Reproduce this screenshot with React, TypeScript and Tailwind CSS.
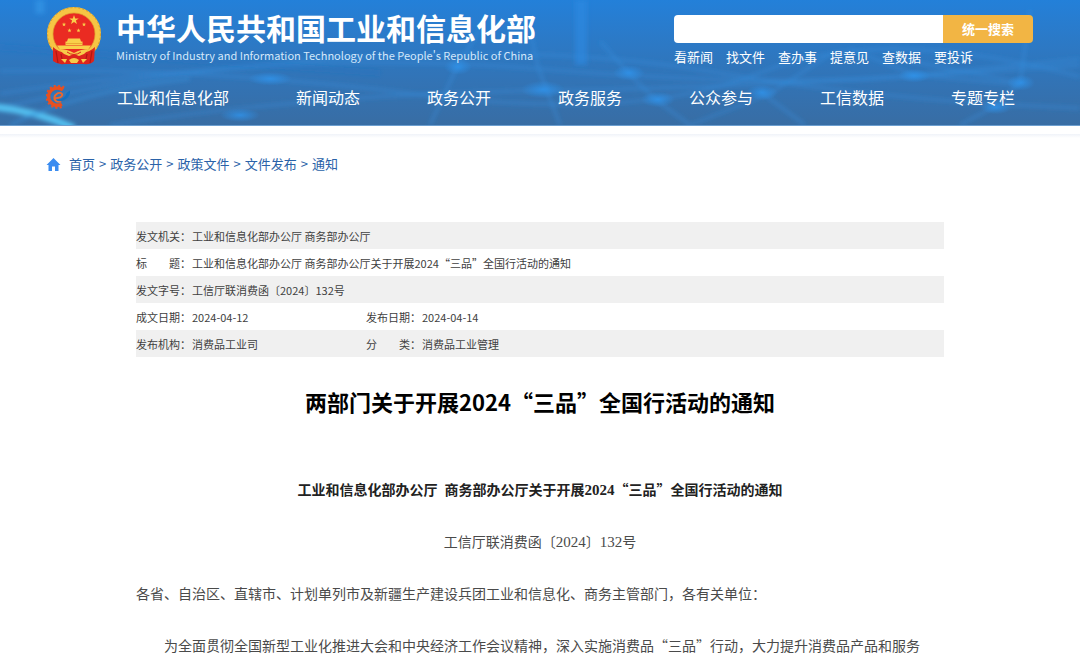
const navItems = ["工业和信息化部", "新闻动态", "政务公开", "政务服务", "公众参与", "工信数据", "专题专栏"]
const quickLinks = ["看新闻", "找文件", "查办事", "提意见", "查数据", "要投诉"]
const crumbs = ["首页", "政务公开", "政策文件", "文件发布", "通知"]

const rows = [
  [["发文机关：", "工业和信息化部办公厅 商务部办公厅"]],
  [["标　　题：", "工业和信息化部办公厅 商务部办公厅关于开展2024“三品”全国行活动的通知"]],
  [["发文字号：", "工信厅联消费函〔2024〕132号"]],
  [["成文日期：", "2024-04-12"], ["发布日期：", "2024-04-14"]],
  [["发布机构：", "消费品工业司"], ["分　　类：", "消费品工业管理"]],
]

const star = "M0 -1 L.24 -.32 L.95 -.31 L.38 .12 L.59 .81 L0 .4 L-.59 .81 L-.38 .12 L-.95 -.31 L-.24 -.32Z"

const Emblem = () => (
  <svg className="h-[58px] w-14 shrink-0" viewBox="0 0 56 58" aria-hidden="true">
    <circle cx="28" cy="27" r="24" fill="#ea2b22" stroke="#f6c544" strokeWidth="6" />
    <circle cx="28" cy="27" r="26.4" fill="none" stroke="#d99a25" strokeWidth="1" strokeDasharray="2 2" />
    <circle cx="28" cy="27" r="21" fill="none" stroke="#dc9b2c" strokeWidth=".7" />
    <path d="M7 40 Q12 45 20 46 L28 48 L36 46 Q44 45 49 40 L48 54 Q44 58 38 57 H18 Q12 58 7 54Z" fill="#dc241d" />
    <path d="M10 44 L12 56 M46 44 L44 56 M15 47 L16 52 M41 47 L40 52" stroke="#b01814" strokeWidth="1.2" />
    <g fill="#f9cf4a">
      <path d={star} transform="translate(28 13) scale(5)" />
      <path d={star} transform="translate(18 17.5) scale(2.2)" />
      <path d={star} transform="translate(38 17.5) scale(2.2)" />
      <path d={star} transform="translate(23.5 23.5) scale(2.2)" />
      <path d={star} transform="translate(32.5 23.5) scale(2.2)" />
      <path d="M22 31.500h12l1 3H21zM19.500 34.500h17v3.500h-17zM11 38.500h34l-2.500 3.500h-29z" />
    </g>
    <path d="M20 36.500h16" stroke="#dd8f23" strokeWidth=".6" />
    <path d="M13 42 Q21 42 28 46 Q35 42 43 42 L38 47 L33 49 L28 47 L23 49 L18 47Z" fill="#f7cb4a" />
    <path d="M21 45q7 5 14 0" fill="none" stroke="#dc241d" />
    <path d="M15 52h6l-2 4zM41 52h-6l2 4zM23 53q5-4 10 0l-2 3h-6z" fill="#f7cb4a" />
  </svg>
)

const GearLogo = () => (
  <svg className="h-6 w-6" viewBox="1 1 22 22" aria-hidden="true">
    <path d="M17.500 3.500 A10 10 0 1 0 16.500 20.500" fill="none" stroke="#e2512c" strokeWidth="2.400" strokeDasharray="1.900 2" />
    <path d="M16.500 5.500 A8 8 0 1 0 15.500 18.500" fill="none" stroke="#e8501f" strokeWidth="3.200" />
    <path d="M8.500 13 Q15 13.500 16 10 Q15.500 7.500 12 8.500 Q8 10.500 8.800 14 Q10.500 17 15 16" fill="none" stroke="#f0672b" strokeWidth="1.700" />
    <path d="M10 14.500 Q18 15 20 8 L23 6 Q23.500 11 19 14 Q14 17.500 10 14.500Z" fill="#1670bf" />
  </svg>
)

const HeaderBackdrop = () => (
  <svg className="absolute inset-0 h-full w-full" viewBox="0 0 1080 127" preserveAspectRatio="none" aria-hidden="true">
    <defs>
      <filter id="soft" x="-20%" y="-50%" width="140%" height="200%">
        <feGaussianBlur stdDeviation="2" />
      </filter>
      <radialGradient id="glow">
        <stop offset="0" stopColor="#2f93eb" stopOpacity=".8" />
        <stop offset="1" stopColor="#2f93eb" stopOpacity="0" />
      </radialGradient>
    </defs>
    <g fill="none" stroke="#3490e2" strokeWidth="3" strokeOpacity=".4" filter="url(#soft)">
      <path d="M0 110 Q160 70 360 58 T720 74 T1080 110" />
      <path d="M0 72 Q200 68 420 96 T760 74 T1080 78" />
      <path d="M110 127 Q320 95 545 92 T1080 66" />
      <path d="M0 95 Q300 50 540 70 T920 76 L1080 60" />
      <path d="M430 127 L458 66 L480 30 M560 127 L538 68 L530 30 M690 127 L770 95 L830 55" />
      <path d="M600 42 L630 76 L655 101 L690 127 M850 50 L915 76 L1020 86 M1020 86 L1030 10" />
      <path d="M760 93 L805 127 M900 60 L1020 84 L995 108 L960 127" />
    </g>
    <g filter="url(#soft)">
      <path d="M-10 108 Q35 112 74 130" fill="none" stroke="#52bff0" strokeWidth="7" />
      <path d="M10 127 Q80 92 190 80" fill="none" stroke="#378fd9" strokeWidth="3" strokeOpacity=".6" />
      <path d="M581 0V66" stroke="#2c8be2" strokeWidth="12" strokeOpacity=".6" />
      <path d="M40 0V14" stroke="#3396e6" strokeWidth="9" strokeOpacity=".7" />
      <path d="M0 48 L380 74" stroke="#266fc0" strokeWidth="6" strokeOpacity=".3" />
    </g>
    <g fill="url(#glow)">
      <ellipse cx="270" cy="80" rx="22" ry="7" />
      <ellipse cx="543" cy="91" rx="22" ry="9" />
      <ellipse cx="629" cy="74" rx="16" ry="8" />
      <ellipse cx="658" cy="101" rx="17" ry="8" />
      <ellipse cx="762" cy="94" rx="16" ry="8" />
      <ellipse cx="914" cy="77" rx="16" ry="7" />
      <ellipse cx="1021" cy="84" rx="14" ry="8" />
      <ellipse cx="996" cy="109" rx="16" ry="7" />
      <ellipse cx="458" cy="68" rx="14" ry="8" />
      <ellipse cx="240" cy="117" rx="20" ry="7" />
    </g>
  </svg>
)

const Header = () => (
  <header className="relative border-b border-[#6d9fd0] bg-linear-to-b from-[#2380d9] via-[#2f76bd] to-[#386da4] text-white">
    <HeaderBackdrop />
    <div className="relative pl-[46px] pr-[47px]">
      <div className="flex items-start justify-between">
        <div className="flex items-start gap-x-[14px] pt-[7px]">
          <Emblem />
          <div className="whitespace-nowrap">
            <h1 className="text-[30px] leading-10 font-bold">中华人民共和国工业和信息化部</h1>
            <p className="text-[11px] leading-4 text-[#d4e8fb]">
              Ministry of Industry and Information Technology of the People's Republic of China
            </p>
          </div>
        </div>
        <div className="w-[359px] pt-[15px]">
          <form className="flex h-7">
            <input aria-label="搜索" className="min-w-0 flex-1 rounded-l-sm bg-white px-2 text-[13px] text-black outline-none" />
            <button type="button" className="w-[90px] rounded-r-sm bg-[#f2b544] text-[13px] font-bold">
              统一搜索
            </button>
          </form>
          <div className="flex gap-x-[13px] pt-1 text-[13px] leading-5">
            {quickLinks.map((label) => (
              <a key={label} href="#">{label}</a>
            ))}
          </div>
        </div>
      </div>
      <div className="flex items-center pt-[18px] pb-4">
        <GearLogo />
        <nav className="ml-[47px] mr-[18px] flex flex-1 justify-between text-[16px] leading-6">
          {navItems.map((label) => (
            <a key={label} href="#">{label}</a>
          ))}
        </nav>
      </div>
    </div>
  </header>
)

const Breadcrumb = () => (
  <nav className="flex items-center px-[46px] pt-4 text-[13px] leading-5 text-[#2a62a8]">
    <svg className="mr-2 h-[15px] w-[15px]" viewBox="0 0 15 15" fill="#3b8cf0" aria-hidden="true">
      <path d="M7.500 1 L14.500 8 H12.500 V14 H9 V9.500 H6 V14 H2.500 V8 H.5Z" />
    </svg>
    {crumbs.map((label, i) => (
      <span key={label}>
        {i > 0 && <span className="px-1">&gt;</span>}
        <a href="#">{label}</a>
      </span>
    ))}
  </nav>
)

const InfoTable = () => (
  <table className="w-full table-fixed text-[11px] leading-4 text-[#404040]">
    <colgroup>
      <col className="w-14" />
      <col className="w-[174px]" />
      <col className="w-14" />
      <col />
    </colgroup>
    <tbody>
      {rows.map((cells) => (
        <tr key={cells[0][0]} className="h-[27px] odd:bg-[#f0f0f0]">
          {cells.map(([label, value]) => [
            <th key={label} scope="row" className="whitespace-nowrap text-left font-normal">{label}</th>,
            <td key={value} colSpan={cells.length === 1 ? 3 : 1}>{value}</td>,
          ])}
        </tr>
      ))}
    </tbody>
  </table>
)

const Num = ({ children }: { children: string }) => (
  <span className="font-['Liberation_Serif',serif] text-[15px] leading-none">{children}</span>
)

export default function App() {
  return (
    <div lang="zh-CN" className="h-screen overflow-hidden bg-white font-['Noto_Sans_CJK_SC',sans-serif]">
      <Header />
      <div className="mt-2 h-1 bg-linear-to-b from-[#f0f3f9] to-white" />
      <Breadcrumb />
      <main className="px-34 pt-12">
        <InfoTable />
        <h2 className="pt-7 text-center text-[22px] leading-8 font-bold text-black">
          两部门关于开展2024“三品”全国行活动的通知
        </h2>
        <article className="pt-[46px] text-[14px] leading-[52px] text-[#4a4a4a]">
          <h3 className="text-center font-bold text-[#222]">
            工业和信息化部办公厅&ensp;商务部办公厅关于开展<Num>2024</Num>“三品”全国行活动的通知
          </h3>
          <p className="text-center">
            工信厅联消费函〔<Num>2024</Num>〕<Num>132</Num>号
          </p>
          <p>各省、自治区、直辖市、计划单列市及新疆生产建设兵团工业和信息化、商务主管部门，各有关单位：</p>
          <p className="indent-[2em]">
            为全面贯彻全国新型工业化推进大会和中央经济工作会议精神，深入实施消费品“三品”行动，大力提升消费品产品和服务
          </p>
        </article>
      </main>
    </div>
  )
}
